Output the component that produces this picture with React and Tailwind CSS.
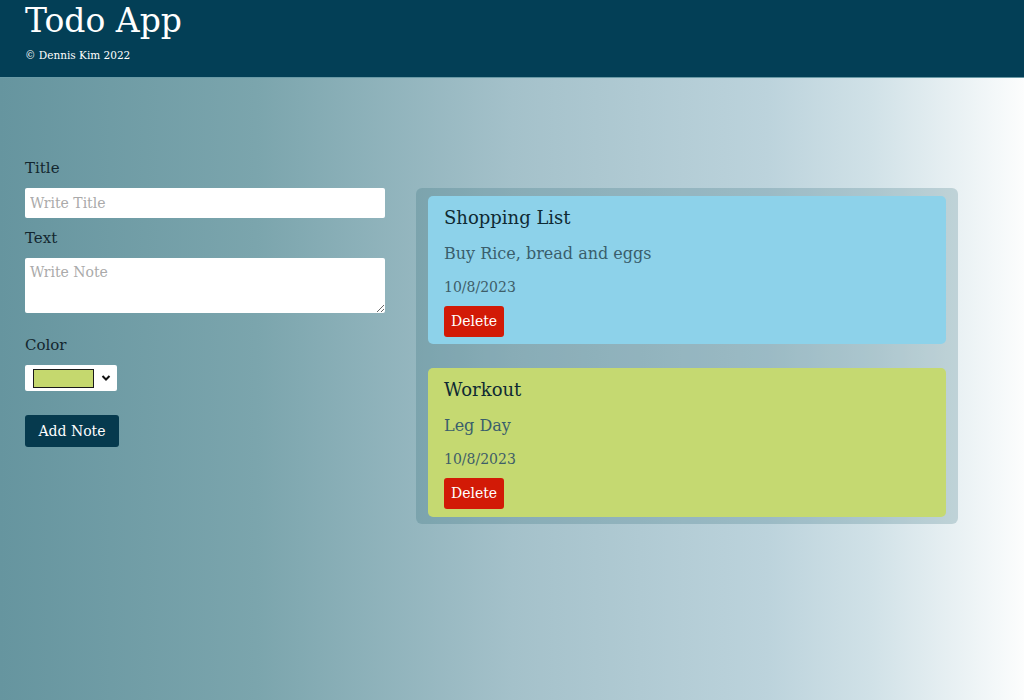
import React from "react";

const font = { fontFamily: '"DejaVu Serif", "Liberation Serif", serif' };

function Note({ title, text, date, bg, h }) {
  return (
    <div className={`${bg} ${h} rounded-[5px] px-4 pt-[10px]`}>
      <div className="text-[18px] leading-[24px] text-[#0f2a33]">{title}</div>
      <div className="mt-[14px] text-[16px] leading-[20px] font-light text-[#3a5e6c]">{text}</div>
      <div className="mt-[14px] text-[14px] leading-[18px] text-[#3e5d68]">{date}</div>
      <button className="mt-[10px] bg-[#d21a06] text-white text-[14px] rounded-[3px] w-[60px] h-[31px] flex items-center justify-center">
        Delete
      </button>
    </div>
  );
}

export default function App() {
  return (
    <div
      style={font}
      className="w-[1024px] h-[700px] overflow-hidden flex flex-col bg-[linear-gradient(to_right,#66959f_0%,#7ba5ad_25%,#a4c1ca_50%,#bcd3dc_75%,#d0e1e7_85%,#fcfdfd_100%)]"
    >
      <header className="bg-[#033f56] h-[78px] px-[25px] pt-[1px] border-b border-[#6a9aa6]">
        <h1 className="text-[33px] leading-[40px] text-white">Todo App</h1>
        <p className="text-[10.5px] leading-[14px] mt-[7px] text-white">© Dennis Kim 2022</p>
      </header>
      <main className="flex px-[25px] pt-[80px] gap-[31px]">
        <form className="w-[360px] flex flex-col">
          <label className="text-[15px] leading-[20px] text-[#13262e]">Title</label>
          <input
            placeholder="Write Title"
            className="mt-[10px] h-[30px] w-[360px] bg-white rounded-[2px] px-[5px] text-[14px] placeholder:text-[#aaaaaa] outline-none"
            style={font}
          />
          <label className="mt-[10px] text-[15px] leading-[20px] text-[#13262e]">Text</label>
          <textarea
            placeholder="Write Note"
            className="mt-[10px] h-[55px] w-[360px] bg-white rounded-[2px] px-[5px] py-[4px] text-[14px] placeholder:text-[#aaaaaa] outline-none resize-y"
            style={font}
          />
          <label className="mt-[22px] text-[15px] leading-[20px] text-[#13262e]">Color</label>
          <div className="mt-[10px] w-[92px] h-[26px] bg-white rounded-[2px] flex items-center pl-[8px] pr-[6px]">
            <div className="w-[61px] h-[19px] bg-[#c5d86e] border border-[#1a1a1a]" />
            <svg className="ml-auto" width="10" height="8" viewBox="0 0 10 8">
              <path d="M1.5 2 L5 5.5 L8.5 2" stroke="#111" strokeWidth="2" fill="none" />
            </svg>
          </div>
          <button
            type="button"
            className="mt-[24px] w-[94px] h-[32px] bg-[#063a4e] text-white text-[14px] rounded-[3px]"
          >
            Add Note
          </button>
        </form>
        <section className="mt-[30px] w-[542px] bg-[#17586b]/20 rounded-[6px] px-[12px] pt-[8px] flex flex-col gap-[24px] h-[336px]">
          <Note title="Shopping List" text="Buy Rice, bread and eggs" date="10/8/2023" bg="bg-[#8dd2ea]" h="h-[148px]" />
          <Note title="Workout" text="Leg Day" date="10/8/2023" bg="bg-[#c5d971]" h="h-[149px]" />
        </section>
      </main>
    </div>
  );
}
